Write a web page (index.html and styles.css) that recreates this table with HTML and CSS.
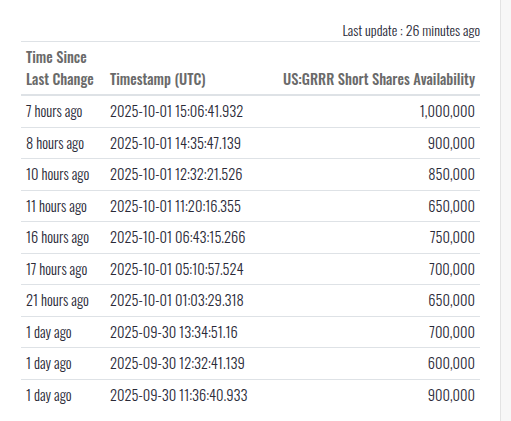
FILE: index.html
```html
<!DOCTYPE html>
<html lang="en">
<head>
<meta charset="utf-8">
<title>Short Shares Availability</title>
<link rel="stylesheet" href="styles.css">
</head>
<body>
<div class="frame">
  <main class="content">
    <div class="updated">Last update : 26 minutes ago</div>
    <table class="history">
      <colgroup>
        <col class="c-since">
        <col class="c-stamp">
        <col>
      </colgroup>
      <thead>
        <tr>
          <th>Time Since<br>Last Change</th>
          <th>Timestamp (UTC)</th>
          <th class="num">US:GRRR Short Shares Availability</th>
        </tr>
      </thead>
      <tbody>
        <tr><td>7 hours ago</td><td>2025-10-01 15:06:41.932</td><td class="num">1,000,000</td></tr>
        <tr><td>8 hours ago</td><td>2025-10-01 14:35:47.139</td><td class="num">900,000</td></tr>
        <tr><td>10 hours ago</td><td>2025-10-01 12:32:21.526</td><td class="num">850,000</td></tr>
        <tr><td>11 hours ago</td><td>2025-10-01 11:20:16.355</td><td class="num">650,000</td></tr>
        <tr><td>16 hours ago</td><td>2025-10-01 06:43:15.266</td><td class="num">750,000</td></tr>
        <tr><td>17 hours ago</td><td>2025-10-01 05:10:57.524</td><td class="num">700,000</td></tr>
        <tr><td>21 hours ago</td><td>2025-10-01 01:03:29.318</td><td class="num">650,000</td></tr>
        <tr><td>1 day ago</td><td>2025-09-30 13:34:51.16</td><td class="num">700,000</td></tr>
        <tr><td>1 day ago</td><td>2025-09-30 12:32:41.139</td><td class="num">600,000</td></tr>
        <tr><td>1 day ago</td><td>2025-09-30 11:36:40.933</td><td class="num">900,000</td></tr>
      </tbody>
    </table>
  </main>
  <aside class="rail"></aside>
</div>
</body>
</html>
```
FILE: styles.css
```css
html, body {
  margin: 0;
  padding: 0;
  background: #ffffff;
}
body {
  font-family: "Oswald", "Roboto Condensed", "Liberation Sans Narrow", sans-serif;
  font-weight: 300;
  font-size: 14.5px;
  line-height: 22.5px;
  color: #2a2a38;
}
.frame {
  display: flex;
  height: 421px;
  overflow: hidden;
}
.content {
  width: 500px;
  box-sizing: border-box;
  padding: 19px 20px 0 21px;
}
.rail {
  flex: 1;
  border-left: 1px solid #e3e3e3;
  background: #f7f7f7;
}
.updated {
  text-align: right;
  font-size: 14px;
  line-height: 22px;
  color: #2a2a38;
}
.history {
  width: 100%;
  border-collapse: collapse;
}
.c-since { width: 84px; }
.c-stamp { width: 160px; }
.history th,
.history td {
  padding: 4px 5px;
  text-align: left;
  border-top: 1px solid #dee2e6;
}
.history th {
  font-weight: 500;
  line-height: 22px;
  vertical-align: bottom;
  color: #6a6a6a;
  border-bottom: 2px solid #dee2e6;
}
.history td {
  vertical-align: top;
}
.history .num {
  text-align: right;
}
```
